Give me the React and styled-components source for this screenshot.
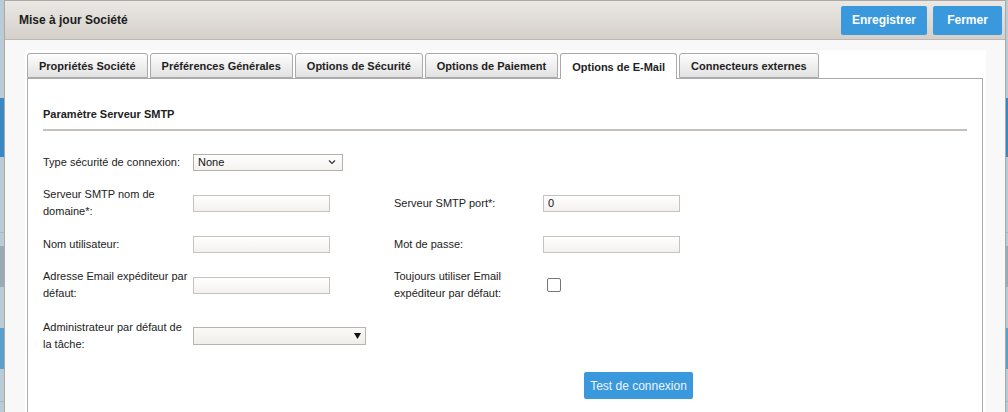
import React from "react";
import styled, { createGlobalStyle } from "styled-components";

const Global = createGlobalStyle`
  html, body { margin: 0; padding: 0; }
  body {
    width: 1008px; height: 412px; overflow: hidden;
    font-family: "Liberation Sans", Arial, sans-serif;
    background: #bccdd6;
  }
`;

const Backdrop = styled.div`
  position: relative;
  width: 1008px;
  height: 412px;
  display: flex;
  flex-direction: column;
  background: #bacbd5;
`;

const Stripe = styled.div`
  height: ${(p) => p.$h}px;
  background: ${(p) => p.$c};
  flex: none;
`;

const Dialog = styled.div`
  position: absolute;
  left: 4px;
  top: 0;
  width: 1002px;
  bottom: 0;
  box-sizing: border-box;
  border: 1px solid #a9a9a9;
  border-bottom: none;
  background: #f8f8f8;
  display: flex;
  flex-direction: column;
`;

const Header = styled.div`
  height: 39px;
  box-sizing: border-box;
  flex: none;
  display: flex;
  align-items: center;
  justify-content: space-between;
  padding: 0 3px 0 14px;
  background: linear-gradient(#ebe8e4, #d4cfc9);
  border-bottom: 1px solid #bdb8b2;
`;

const Title = styled.div`
  font-size: 12px;
  font-weight: bold;
  color: #1c1c1c;
  margin-top: -1px;
`;

const HeaderButtons = styled.div`
  display: flex;
  gap: 6px;
`;

const HeaderButton = styled.button`
  width: ${(p) => p.$w}px;
  height: 29px;
  padding: 0;
  border: none;
  border-radius: 2px;
  background: #3999dc;
  color: #fff;
  font-family: inherit;
  font-size: 12px;
  font-weight: bold;
  text-align: center;
  cursor: pointer;
`;

const Body = styled.div`
  flex: 1;
  padding: 10px 19px 0 20px;
  display: flex;
`;

const Sheet = styled.div`
  flex: 1;
  background: #fff;
  padding: 3px 3px 0 2px;
  display: flex;
  flex-direction: column;
`;

const TabBar = styled.div`
  display: flex;
  gap: 2px;
  height: 25px;
  position: relative;
  z-index: 1;
`;

const Tab = styled.div`
  box-sizing: border-box;
  height: ${(p) => (p.$active ? 26 : 25)}px;
  padding: ${(p) => (p.$active ? 1 : 0)}px 11px 0;
  display: flex;
  align-items: center;
  border: 1px solid #aaa;
  border-bottom: ${(p) => (p.$active ? "none" : "1px solid #aaa")};
  border-radius: 3px 3px 0 0;
  background: ${(p) => (p.$active ? "#fff" : "linear-gradient(#fdfdfd, #e2e2e2)")};
  font-size: 11px;
  font-weight: bold;
  color: #1e1e1e;
  white-space: nowrap;
`;

const Panel = styled.div`
  flex: 1;
  border: 1px solid #aaa;
  border-bottom: none;
  padding: 29px 15px 0 15px;
`;

const SectionTitle = styled.div`
  font-size: 11px;
  font-weight: bold;
  color: #222;
  line-height: 13px;
  padding-bottom: 8px;
  border-bottom: 2px solid #c4c0bb;
`;

const Form = styled.div`
  margin-top: 14px;
  display: flex;
  flex-direction: column;
  gap: 7px;
`;

const Row = styled.div`
  display: grid;
  grid-template-columns: 150px 201px 149px 1fr;
  align-items: center;
  min-height: 34px;
  margin-top: ${(p) => p.$extra || 0}px;
`;

const Label = styled.div`
  font-size: 11px;
  line-height: 17px;
  color: #222;
`;

const TextInput = styled.input`
  box-sizing: border-box;
  width: 137px;
  height: 17px;
  margin: 0;
  padding: 0 4px;
  border: 1px solid #c6c2bd;
  background: linear-gradient(#ffffff, #f3f1ee);
  font-family: inherit;
  font-size: 11px;
  color: #111;
  outline: none;
`;

const SelectBox = styled.div`
  position: relative;
  box-sizing: border-box;
  width: ${(p) => p.$w}px;
  height: ${(p) => p.$h}px;
  border: 1px solid ${(p) => p.$border};
  background: ${(p) => p.$bg};
  font-size: 11px;
  line-height: ${(p) => p.$h - 2}px;
  padding-left: 4px;
  color: #111;
`;

const Arrow = styled.span`
  position: absolute;
  right: ${(p) => p.$r}px;
  top: 50%;
  transform: translateY(-50%);
  display: flex;
`;

const Check = styled.div`
  box-sizing: border-box;
  width: 14px;
  height: 14px;
  margin-left: 4px;
  border: 1px solid #767676;
  border-radius: 2px;
  background: #fff;
`;

const ButtonRow = styled.div`
  margin-top: 19px;
  padding-left: 541px;
`;

const TestButton = styled.button`
  box-sizing: border-box;
  width: 109px;
  height: 27px;
  padding: 0;
  border: none;
  border-radius: 2px;
  background: #3999dc;
  color: #eef4fb;
  font-family: inherit;
  font-size: 12px;
  cursor: pointer;
`;

const tabs = [
  "Propriétés Société",
  "Préférences Générales",
  "Options de Sécurité",
  "Options de Paiement",
  "Options de E-Mail",
  "Connecteurs externes",
];

export default function App() {
  return (
    <>
      <Global />
      <Backdrop>
        <Stripe $h={98} $c="#bacbd5" />
        <Stripe $h={59} $c="#3a88c3" />
        <Stripe $h={75} $c="#bacbd5" />
        <Stripe $h={1} $c="#a5b8c2" />
        <Stripe $h={13} $c="#bacbd5" />
        <Stripe $h={41} $c="#9aabb4" />
        <Stripe $h={41} $c="#bacbd5" />
        <Stripe $h={41} $c="#5aa0cd" />
        <Stripe $h={32} $c="#bacbd5" />
        <Stripe $h={1} $c="#a5b8c2" />
        <Dialog>
          <Header>
            <Title>Mise à jour Société</Title>
            <HeaderButtons>
              <HeaderButton $w={86}>Enregistrer</HeaderButton>
              <HeaderButton $w={69}>Fermer</HeaderButton>
            </HeaderButtons>
          </Header>
          <Body>
            <Sheet>
              <TabBar>
                {tabs.map((t, i) => (
                  <Tab key={t} $active={i === 4}>
                    {t}
                  </Tab>
                ))}
              </TabBar>
              <Panel>
                <SectionTitle>Paramètre Serveur SMTP</SectionTitle>
                <Form>
                  <Row>
                    <Label>Type sécurité de connexion:</Label>
                    <SelectBox $w={150} $h={17} $border="#b3afaa" $bg="linear-gradient(#fff,#f4f2ef)">
                      None
                      <Arrow $r={6}>
                        <svg width="8" height="5" viewBox="0 0 8 5">
                          <path d="M1 1l3 3 3-3" fill="none" stroke="#333" strokeWidth="1.2" />
                        </svg>
                      </Arrow>
                    </SelectBox>
                  </Row>
                  <Row>
                    <Label>Serveur SMTP nom de domaine*:</Label>
                    <TextInput defaultValue="" />
                    <Label>Serveur SMTP port*:</Label>
                    <TextInput defaultValue="0" />
                  </Row>
                  <Row>
                    <Label>Nom utilisateur:</Label>
                    <TextInput defaultValue="" />
                    <Label>Mot de passe:</Label>
                    <TextInput defaultValue="" />
                  </Row>
                  <Row>
                    <Label>Adresse Email expéditeur par défaut:</Label>
                    <TextInput defaultValue="" />
                    <Label>Toujours utiliser Email expéditeur par défaut:</Label>
                    <Check />
                  </Row>
                  <Row $extra={10}>
                    <Label>Administrateur par défaut de la tâche:</Label>
                    <SelectBox $w={173} $h={18} $border="#b8b4af" $bg="linear-gradient(#fbfaf8,#f0eeea)">
                      <Arrow $r={4}>
                        <svg width="7" height="7" viewBox="0 0 7 7">
                          <path d="M0 0.5h7L3.5 6.5z" fill="#111" />
                        </svg>
                      </Arrow>
                    </SelectBox>
                  </Row>
                </Form>
                <ButtonRow>
                  <TestButton>Test de connexion</TestButton>
                </ButtonRow>
              </Panel>
            </Sheet>
          </Body>
        </Dialog>
      </Backdrop>
    </>
  );
}
